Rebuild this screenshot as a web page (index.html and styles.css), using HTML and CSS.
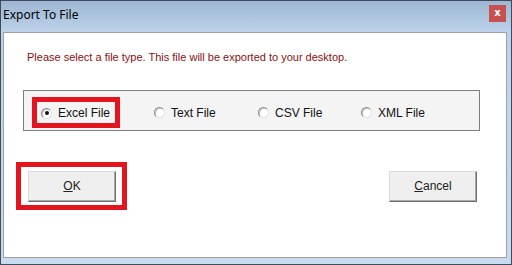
FILE: index.html
```html
<!DOCTYPE html>
<html lang="en">
<head>
  <meta charset="UTF-8" />
  <title>Export To File</title>
  <link rel="stylesheet" href="styles.css">
</head>
<body>
  <div class="window">
    <div class="titlebar">
      <span class="title">Export To File</span>
      <div class="close">x</div>
    </div>

    <div class="panel">
      <p class="message">Please select a file type. This file will be exported to your desktop.</p>

      <div class="group">
        <div class="mark excel">
          <label class="option"><span class="radio checked"></span>Excel File</label>
        </div>
        <label class="option text"><span class="radio"></span>Text File</label>
        <label class="option csv"><span class="radio"></span>CSV File</label>
        <label class="option"><span class="radio"></span>XML File</label>
      </div>

      <div class="actions">
        <div class="mark ok">
          <div class="button"><u>O</u>K</div>
        </div>
        <div class="button"><u>C</u>ancel</div>
      </div>
    </div>
  </div>
</body>
</html>
```

FILE: styles.css
```css
body {
  margin: 0;
  font-family: 'Liberation Sans', Arial, sans-serif;
}

.window {
  width: 512px;
  height: 265px;
  box-sizing: border-box;
  border: 1px solid #3d4b5b;
  padding: 0 4px 6px 2px;
  display: flex;
  flex-direction: column;
  background: linear-gradient(to bottom, #9db6d3 0, #bdd2ea 30px, #c9dcef 100%);
}

.titlebar {
  height: 31px;
  display: flex;
  justify-content: space-between;
  align-items: flex-start;
}

.title {
  font-family: 'Noto Sans', sans-serif;
  font-size: 12px;
  line-height: 16px;
  margin-top: 6px;
  color: #000;
}

.close {
  width: 17px;
  height: 17px;
  margin-top: 4px;
  margin-right: 1px;
  background: #c75150;
  color: #fff;
  font: bold 10px/15px 'DejaVu Sans', sans-serif;
  text-align: center;
}

.panel {
  flex: 1;
  background: #fff;
  border: 1px solid #a0a0a0;
}

.message {
  margin: 18px 0 0 23px;
  font-size: 11px;
  line-height: 13px;
  color: #8b0f0f;
}

.group {
  margin: 26px 0 0 19px;
  width: 457px;
  height: 41px;
  box-sizing: border-box;
  border: 1px solid #7e7e7e;
  background: #f4f4f4;
  display: flex;
  align-items: center;
  padding: 6px 0 2px 8px;
}

.mark {
  border: 5px solid #e3141e;
}

.excel {
  padding: 3px 5px 2px 4px;
  margin-right: 34px;
}

.option {
  display: flex;
  align-items: center;
  gap: 6px;
  font-size: 12px;
  line-height: 16px;
  color: #111;
}

.text {
  width: 104px;
}

.csv {
  width: 103px;
}

.radio {
  width: 11px;
  height: 11px;
  box-sizing: border-box;
  border-radius: 50%;
  border: 1px solid;
  border-color: #8a8a8a #e2e2e2 #e2e2e2 #8a8a8a;
  background: #fff;
  box-shadow: inset 1px 1px 0 #c8c8c8;
  display: flex;
  align-items: center;
  justify-content: center;
}

.checked::after {
  content: '';
  width: 4px;
  height: 4px;
  border-radius: 50%;
  background: #111;
}

.actions {
  display: flex;
  justify-content: space-between;
  align-items: center;
  margin-top: 31px;
  padding: 0 29px 0 12px;
}

.ok {
  padding: 4px 6px 3px 7px;
}

.button {
  width: 88px;
  height: 31px;
  box-sizing: border-box;
  border: 1px solid;
  border-color: #dadada #6f6f6f #6f6f6f #dadada;
  box-shadow: inset -1px -1px 0 #a9a9a9;
  background: #efefef;
  font-size: 12px;
  line-height: 29px;
  text-align: center;
  color: #222;
}
```
